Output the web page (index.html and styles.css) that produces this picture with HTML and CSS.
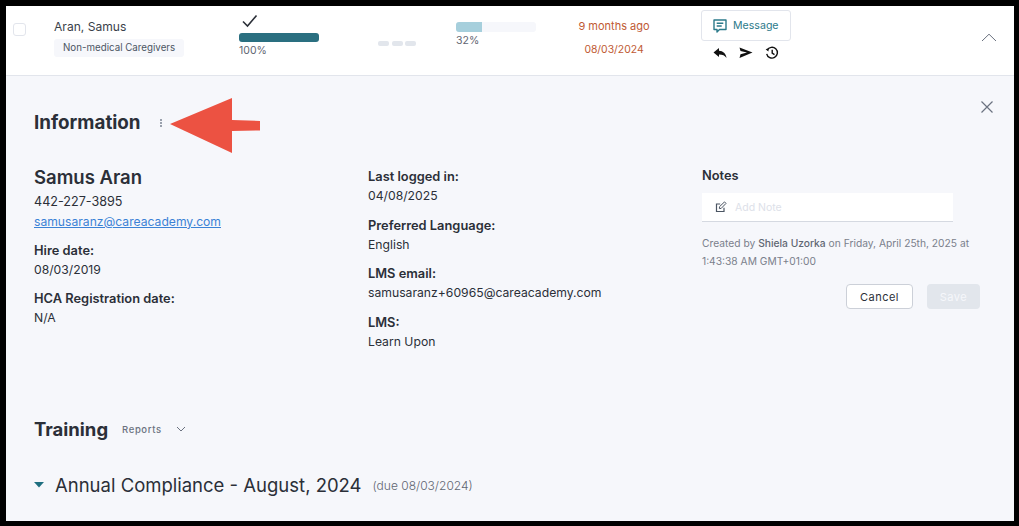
FILE: index.html
```html
<!DOCTYPE html>
<html lang="en">
<head>
<meta charset="utf-8">
<title>Samus Aran</title>
<link rel="stylesheet" href="styles.css">
</head>
<body>
<div class="frame">
  <div class="row">
    <div class="cell-check"><span class="checkbox"></span></div>
    <div class="cell-name">
      <div class="name">Aran, Samus</div>
      <div class="tag">Non-medical Caregivers</div>
    </div>
    <div class="cell-progress-a">
      <svg class="check" width="18" height="14" viewBox="0 0 18 14"><path d="M2 7.5 6.5 12 15.5 1.5" fill="none" stroke="#2b2f38" stroke-width="1.6"/></svg>
      <div class="bar"><div class="fill fill-full"></div></div>
      <div class="pct">100%</div>
    </div>
    <div class="cell-dashes"><i></i><i></i><i></i></div>
    <div class="cell-progress-b">
      <div class="bar bar-tall"><div class="fill fill-part"></div></div>
      <div class="pct">32%</div>
    </div>
    <div class="cell-dates">
      <div>9 months ago</div>
      <div class="date2">08/03/2024</div>
    </div>
    <div class="cell-actions">
      <div class="msg">
        <svg width="16" height="16" viewBox="0 0 16 16" fill="none" stroke="#2b7a8a" stroke-width="1.4"><path d="M2 2h12v9.500H7.500L5 14v-2.500H2z" stroke-linejoin="round"/><path d="M4.700 5.200h6.600M4.700 8h5"/></svg>
        <span>Message</span>
      </div>
      <div class="mini">
        <svg width="14" height="12" viewBox="0 0 14 12"><path d="M0.500 5.500 6 1v2.700c4 .2 7 2.500 7.500 7.300C12 8.500 9.500 7.500 6 7.500V10z" fill="#111"/></svg>
        <svg width="14" height="12" viewBox="0 0 14 12"><path d="M0.500 0.500 13.500 5.500 0.500 11 1.500 7.200 8 5.500 1.500 4z" fill="#111"/></svg>
        <svg width="14" height="14" viewBox="0 0 14 14" fill="none" stroke="#111" stroke-width="1.400"><path d="M2.200 4.200A5.400 5.400 0 1 1 1.700 7.800"/><path d="M7.200 3.800V7.200L9.500 8.600"/><path d="M0.600 3.200 3.500 2.200 3.500 5.400z" fill="#111" stroke="none"/></svg>
      </div>
    </div>
    <div class="cell-chevron">
      <svg width="16" height="9" viewBox="0 0 16 9"><path d="M1 8 8 1.200 15 8" fill="none" stroke="#6b7280" stroke-width="1"/></svg>
    </div>
  </div>

  <div class="panel">
    <svg class="close" width="14" height="14" viewBox="0 0 14 14"><path d="M1.500 1.500 12.500 12.500M12.500 1.500 1.500 12.500" stroke="#6b7280" stroke-width="1.200"/></svg>
    <div class="head-info">
      <h2 class="h-info">Information</h2>
      <span class="dots"><i></i><i></i><i></i></span>
    </div>
    <svg class="arrow" width="92" height="56" viewBox="0 0 92 56"><path d="M0 26 62 0V22L90 23V32.500L62 33V55z" fill="#ec5242"/></svg>

    <div class="info-grid">
      <div class="col">
        <div class="person">Samus Aran</div>
        <div class="val phone">442-227-3895</div>
        <a class="mail" href="#">samusaranz@careacademy.com</a>
        <div class="lab first">Hire date:</div>
        <div class="val">08/03/2019</div>
        <div class="lab">HCA Registration date:</div>
        <div class="val">N/A</div>
      </div>
      <div class="col col-mid">
        <div class="lab top">Last logged in:</div>
        <div class="val">04/08/2025</div>
        <div class="lab">Preferred Language:</div>
        <div class="val">English</div>
        <div class="lab">LMS email:</div>
        <div class="val">samusaranz+60965@careacademy.com</div>
        <div class="lab">LMS:</div>
        <div class="val">Learn Upon</div>
      </div>
      <div class="col col-notes">
        <div class="lab top">Notes</div>
        <div class="note-input">
          <svg width="12" height="12" viewBox="0 0 12 12" fill="none" stroke="#4b5563" stroke-width="1.200"><path d="M9 6.800V10.500H1.500V3H5.200"/><path d="M4.500 5.700 9.500 .9 11 2.400 6.200 7.400 4.400 7.600z" stroke-width="1"/></svg>
          <span>Add Note</span>
        </div>
        <p class="created">Created by <b>Shiela Uzorka</b> on Friday, April 25th, 2025 at 1:43:38 AM GMT+01:00</p>
        <div class="btns">
          <button class="btn cancel">Cancel</button>
          <button class="btn save">Save</button>
        </div>
      </div>
    </div>

    <div class="head-training">
      <h2>Training</h2>
      <span class="reports">Reports</span>
      <svg width="10" height="6" viewBox="0 0 10 6"><path d="M1 1 5 5 9 1" fill="none" stroke="#6b7280" stroke-width="1"/></svg>
    </div>
    <div class="course">
      <svg width="10" height="6" viewBox="0 0 10 6"><path d="M0 0H10L5 5.500z" fill="#1f6f80"/></svg>
      <span class="course-name">Annual Compliance - August, 2024</span>
      <span class="due">(due 08/03/2024)</span>
    </div>
  </div>
</div>
</body>
</html>
```
FILE: styles.css
```css
* { box-sizing: border-box; }
html, body { margin: 0; height: 526px; overflow: hidden; background: #000; }
body { font-family: Inter, "Liberation Sans", sans-serif; color: #2b2f38; }
.frame { margin: 6px 5px 5px 6px; height: 515px; overflow: hidden; background: #f6f7fb; display: flex; flex-direction: column; }

.row { height: 70px; flex: none; background: #fff; border-bottom: 1px solid #e2e5ec; display: flex; position: relative; }
.cell-check { width: 48px; padding: 17px 0 0 7px; }
.checkbox { display: block; width: 13px; height: 13px; border: 1px solid #e2e5ec; border-radius: 3px; }
.cell-name { width: 185px; padding-top: 13px; }
.name { font-size: 12.100px; line-height: 16px; color: #3a3f4a; }
.tag { display: inline-block; margin-top: 3px; height: 18px; padding: 0 9px; font-size: 9.750px; line-height: 18px; background: #f6f7fb; border-radius: 3px; color: #4b5563; }
.cell-progress-a { width: 139px; padding-top: 8px; }
.check { display: block; margin-left: 2px; }
.bar { width: 80px; height: 9px; margin-top: 5px; border-radius: 3px; background: #f6f7fb; overflow: hidden; }
.bar-tall { height: 10px; margin-top: 0; }
.fill { height: 100%; }
.fill-full { width: 100%; background: #2a6f80; }
.fill-part { width: 32%; background: #a6cfdc; }
.pct { font-size: 10.500px; line-height: 14px; color: #5f6672; margin-top: 2px; }
.cell-dashes { width: 78px; display: flex; gap: 2.500px; padding-top: 35px; }
.cell-dashes i { width: 11px; height: 5px; border-radius: 2px; background: #e2e6ec; }
.cell-progress-b { width: 113px; padding-top: 16px; }
.cell-dates { width: 90px; padding-top: 13px; margin-right: 42px; font-size: 11px; text-align: center; color: #c05a33; line-height: 15px; white-space: nowrap; }
.date2 { font-size: 10.400px; margin-top: 8px; }
.cell-actions { width: 90px; padding-top: 4px; }
.msg { height: 31px; border: 1px solid #e2e5ec; border-radius: 3px; display: flex; align-items: center; gap: 5px; padding-left: 10px; font-size: 10.600px; color: #2b7a8a; }
.msg svg { flex: none; }
.mini { display: flex; align-items: center; gap: 12px; padding: 5px 0 0 12px; }
.cell-chevron { margin-left: auto; padding: 27px 17px 0 0; }
.cell-chevron svg { display: block; }

.panel { position: relative; flex: 1; padding: 0 0 0 28px; }
.close { position: absolute; left: 974px; top: 24px; }
.arrow { position: absolute; left: 164px; top: 22px; }
h2 { margin: 0; font-size: 18.500px; line-height: 24px; font-weight: 700; color: #2b2f38; }
.h-info { font-size: 18.800px; }
.head-info { display: flex; align-items: center; height: 24px; margin-top: 35px; }
.dots { margin-left: 19px; display: flex; flex-direction: column; gap: 1px; }
.dots i { width: 2px; height: 2px; background: #9aa1ad; }

.info-grid { display: grid; grid-template-columns: 334px 334px 278px; margin-top: 6px; height: 276px; }
.col { padding-top: 24px; }
.col-mid { padding-top: 27px; }
.col-notes { padding-top: 26px; }
.person { font-size: 18.500px; font-weight: 600; line-height: 24px; color: #2b2f38; }
.val { font-size: 12.200px; line-height: 18px; color: #2b2f38; margin-top: 1px; }
.phone { margin-top: 4px; font-size: 12.600px; }
.mail { display: block; font-size: 12.150px; line-height: 18px; color: #3b82d6; margin-top: 1.500px; }
.lab { font-size: 12.850px; font-weight: 600; line-height: 18px; margin-top: 11.700px; color: #2b2f38; }
.lab.first { margin-top: 11px; }
.lab.top { margin-top: 0; }
.note-input { width: 251px; height: 29px; margin-top: 8px; background: #fff; border-bottom: 1px solid #d5d9e1; display: flex; align-items: center; gap: 8px; padding-left: 13px; font-size: 10.500px; color: #dde1e9; }
.created { margin: 12px 0 0; font-size: 10.250px; line-height: 18px; color: #7a808b; }
.created b { font-weight: 500; color: #5f6672; }
.btns { display: flex; gap: 14px; margin: 14px 0 0 144px; }
.btn { height: 25px; padding: 0; border-radius: 4px; font-family: inherit; font-size: 11px; letter-spacing: .5px; }
.cancel { width: 67px; background: #fff; border: 1px solid #ccd0d8; color: #2b2f38; }
.save { width: 53px; background: #e2e6ec; border: 0; color: #f6f7fb; }

.head-training { display: flex; align-items: center; height: 24px; }
.reports { margin-left: 14px; font-size: 9.500px; font-weight: 500; letter-spacing: .6px; color: #6b7280; }
.head-training svg { margin-left: 14px; }
.course { display: flex; align-items: center; margin-top: 31px; height: 26px; }
.course-name { margin-left: 11px; font-size: 18.500px; color: #2b2f38; white-space: nowrap; }
.due { margin-left: 11px; font-size: 12px; font-weight: 300; color: #5f6672; }
```
